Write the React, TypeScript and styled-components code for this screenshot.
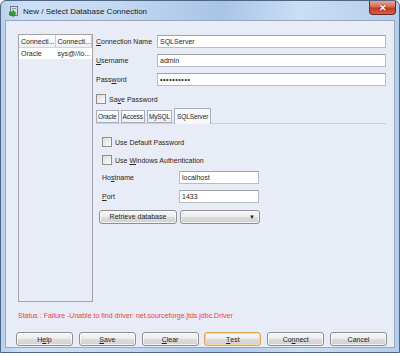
import React from 'react';
import styled, { createGlobalStyle } from 'styled-components';

const GlobalStyle = createGlobalStyle`
  html, body {
    margin: 0;
    background: #ffffff;
  }
  * {
    box-sizing: border-box;
  }
`

const Window = styled.div`
  width: 400px;
  height: 353px;
  display: flex;
  flex-direction: column;
  border: 1px solid #4f6584;
  border-radius: 6px 6px 0 0;
  padding: 0 4px 4px 4px;
  background: linear-gradient(90deg, #b9d1ee 0%, #cfe0f5 6%, #c3d8f1 30%, #a8c4e6 55%, #cadef4 75%, #b4cdec 100%);
  font-family: "Liberation Sans", Arial, sans-serif;
`

const TitleBar = styled.div`
  height: 19px;
  display: flex;
  align-items: center;
  padding-left: 4px;
  gap: 4px;
`

const TitleText = styled.span`
  font-size: 8px;
  color: #1a1a1a;
  margin-top: 1px;
`

const CloseButton = styled.div`
  margin-left: auto;
  align-self: flex-start;
  width: 27px;
  height: 14px;
  margin-right: -1px;
  border: 1px solid #6a2a22;
  border-top: none;
  border-radius: 0 0 4px 4px;
  background: linear-gradient(#e9a696 0%, #d46a55 45%, #c03a24 55%, #d4604a 100%);
  color: #ffffff;
  font-size: 9px;
  font-weight: bold;
  display: flex;
  align-items: center;
  justify-content: center;
  text-shadow: 0 0 2px #5a1a10;
`

const Client = styled.div`
  flex: 1;
  display: flex;
  flex-direction: column;
  border: 1px solid #97a8c0;
  background: #e8ecf6;
  padding: 13px 8px 1px 12px;
  color: #262626;
`

const MainRow = styled.div`
  flex: 1;
  display: flex;
`

const ConnList = styled.div`
  width: 75px;
  border: 1px solid #a3a3a3;
  background: #e8ecf6;
  font-size: 7px;
`

const ListRow = styled.div<{ $header?: boolean }>`
  display: flex;
  height: ${p => (p.$header ? '13px' : '11px')};
  background: ${p => (p.$header ? 'linear-gradient(#ffffff, #eef0f3)' : '#ffffff')};
  border-bottom: ${p => (p.$header ? '1px solid #cfd3da' : 'none')};
`

const ListCell = styled.div<{ $header?: boolean }>`
  width: 50%;
  padding-left: 2px;
  display: flex;
  align-items: center;
  overflow: hidden;
  white-space: nowrap;
  border-right: ${p => (p.$header ? '1px solid #c8ccd3' : 'none')};
`

const Form = styled.div`
  flex: 1;
  margin-left: 3px;
  display: flex;
  flex-direction: column;
  font-size: 7px;
`

const FieldRow = styled.div<{ $top: number }>`
  display: flex;
  align-items: center;
  height: 13px;
  margin-top: ${p => p.$top}px;
`

const Label = styled.span<{ $width: number; $indent?: number }>`
  width: ${p => p.$width}px;
  margin-left: ${p => p.$indent || 0}px;
`

const TextInput = styled.div<{ $width?: number }>`
  ${p => (p.$width ? `width: ${p.$width}px;` : 'flex: 1;')}
  height: 13px;
  background: #ffffff;
  border: 1px solid #b8bcc4;
  border-top-color: #9ea2aa;
  padding-left: 2px;
  display: flex;
  align-items: center;
  font-size: 7px;
`

const Dots = styled.span`
  letter-spacing: 0.6px;
  font-weight: bold;
`

const CheckRow = styled.div<{ $top: number; $indent?: number }>`
  display: flex;
  align-items: center;
  gap: 3px;
  height: 10px;
  margin-top: ${p => p.$top}px;
  margin-left: ${p => p.$indent || 0}px;
`

const CheckBox = styled.span`
  width: 10px;
  height: 10px;
  border: 1px solid #8e8f8f;
  background: linear-gradient(135deg, #dcdcdc, #fdfdfd);
`

const TabStrip = styled.div`
  display: flex;
  align-items: flex-end;
  height: 16px;
  margin-top: 4px;
  border-bottom: 1px solid #c9ced8;
`

const Tab = styled.div<{ $active?: boolean }>`
  height: ${p => (p.$active ? '16px' : '13px')};
  padding: 0 ${p => (p.$active ? '2px' : '1px')};
  margin-right: ${p => (p.$active ? '0' : '2px')};
  margin-bottom: ${p => (p.$active ? '-1px' : '0')};
  border: 1px solid #a9afba;
  border-bottom: ${p => (p.$active ? 'none' : '1px solid #a9afba')};
  background: ${p => (p.$active ? '#f6f8fb' : 'linear-gradient(#fdfdfe, #eceff3)')};
  display: flex;
  align-items: center;
  font-size: 6.5px;
  letter-spacing: -0.1px;
`

const TabPanel = styled.div`
  display: flex;
  flex-direction: column;
  padding-left: 3px;
`

const ButtonBase = styled.div<{ $width: number; $focused?: boolean }>`
  width: ${p => p.$width}px;
  height: 14px;
  border: 1px solid ${p => (p.$focused ? '#dea550' : '#8c8f94')};
  border-radius: 3px;
  background: linear-gradient(#f7f7f7 0%, #ececec 48%, #dcdcdc 52%, #d0d1d3 100%);
  display: flex;
  align-items: center;
  justify-content: center;
  font-size: 7px;
  color: #1e1e1e;
  box-shadow: inset 0 0 0 1px ${p => (p.$focused ? '#f6d9a0' : 'rgba(255,255,255,0.7)')};
`

const Combo = styled(ButtonBase)`
  justify-content: flex-end;
  padding-right: 4px;
  margin-left: 3px;
  font-size: 6px;
`

const Status = styled.div`
  height: 9px;
  margin-top: 9px;
  font-size: 7px;
  color: #f03c3c;
  display: flex;
  align-items: center;
`

const ButtonRow = styled.div`
  display: flex;
  justify-content: space-between;
  margin: 12px -1px 0 -2px;
`

const DbIcon = () => (
  <svg width="10" height="12" viewBox="0 0 10 12">
    <rect x="1.5" y="1.5" width="7" height="9" fill="#d8dde4" stroke="#6f7a86" />
    <rect x="3" y="3" width="4" height="1" fill="#8a96a3" />
    <path d="M0 7 L4 7 L4 5 L7 8.5 L4 12 L4 10 L0 10 Z" fill="#2fa52f" stroke="#1c6e1c" strokeWidth="0.5" />
  </svg>
)

const U = styled.span`
  text-decoration: underline;
`

const App = () => {
  return (
    <>
      <GlobalStyle />
      <Window>
        <TitleBar>
          <DbIcon />
          <TitleText>New / Select Database Connection</TitleText>
          <CloseButton>✕</CloseButton>
        </TitleBar>
        <Client>
          <MainRow>
            <ConnList>
              <ListRow $header>
                <ListCell $header>Connecti...</ListCell>
                <ListCell $header>Connecti...</ListCell>
              </ListRow>
              <ListRow>
                <ListCell>Oracle</ListCell>
                <ListCell>sys@//lo...</ListCell>
              </ListRow>
            </ConnList>
            <Form>
              <FieldRow $top={1}>
                <Label $width={61}><U>C</U>onnection Name</Label>
                <TextInput>SQLServer</TextInput>
              </FieldRow>
              <FieldRow $top={6}>
                <Label $width={61}><U>U</U>sername</Label>
                <TextInput>admin</TextInput>
              </FieldRow>
              <FieldRow $top={6}>
                <Label $width={61}>Pass<U>w</U>ord</Label>
                <TextInput><Dots>••••••••••</Dots></TextInput>
              </FieldRow>
              <CheckRow $top={8}>
                <CheckBox />
                <span>Sa<U>v</U>e Password</span>
              </CheckRow>
              <TabStrip>
                <Tab>Oracle</Tab>
                <Tab>Access</Tab>
                <Tab>MySQL</Tab>
                <Tab $active>SQLServer</Tab>
              </TabStrip>
              <TabPanel>
                <CheckRow $top={13} $indent={3}>
                  <CheckBox />
                  <span>Use Default Password</span>
                </CheckRow>
                <CheckRow $top={8} $indent={3}>
                  <CheckBox />
                  <span>Use <U>W</U>indows Authentication</span>
                </CheckRow>
                <FieldRow $top={6}>
                  <Label $width={77} $indent={3}>Ho<U>s</U>tname</Label>
                  <TextInput $width={80}>localhost</TextInput>
                </FieldRow>
                <FieldRow $top={6}>
                  <Label $width={77} $indent={3}><U>P</U>ort</Label>
                  <TextInput $width={80}>1433</TextInput>
                </FieldRow>
                <FieldRow $top={7}>
                  <ButtonBase $width={78}>Retrieve database</ButtonBase>
                  <Combo $width={80}>▼</Combo>
                </FieldRow>
              </TabPanel>
            </Form>
          </MainRow>
          <Status>Status : Failure -Unable to find driver: net.sourceforge.jtds.jdbc.Driver</Status>
          <ButtonRow>
            <ButtonBase $width={57}>H<U>e</U>lp</ButtonBase>
            <ButtonBase $width={57}><U>S</U>ave</ButtonBase>
            <ButtonBase $width={57}><U>C</U>lear</ButtonBase>
            <ButtonBase $width={57} $focused><U>T</U>est</ButtonBase>
            <ButtonBase $width={57}>Co<U>n</U>nect</ButtonBase>
            <ButtonBase $width={57}>Cancel</ButtonBase>
          </ButtonRow>
        </Client>
      </Window>
    </>
  )
}

export default App
